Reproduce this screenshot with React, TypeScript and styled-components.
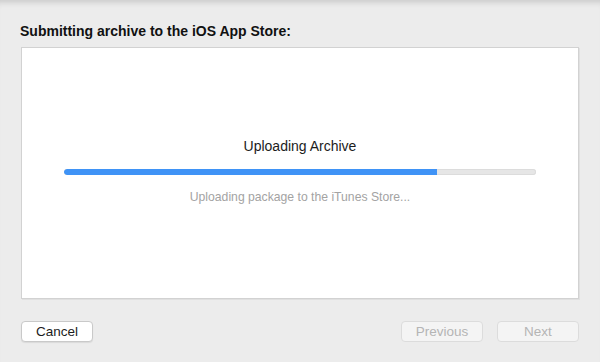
import styled, { createGlobalStyle } from 'styled-components';

const GlobalStyle = createGlobalStyle`
  html, body {
    margin: 0;
    padding: 0;
    background: #ececec;
  }
  * {
    box-sizing: border-box;
  }
`;

export default function App() {
  const progress = 0.79;

  return (
    <Sheet>
      <GlobalStyle />
      <Heading>Submitting archive to the iOS App Store:</Heading>
      <Panel>
        <Title>Uploading Archive</Title>
        <Track>
          <Fill style={{ width: `${progress * 100}%` }} />
        </Track>
        <Status>Uploading package to the iTunes Store...</Status>
      </Panel>
      <Footer>
        <Button $width={72}>Cancel</Button>
        <Spacer />
        <Button $width={82} disabled>
          Previous
        </Button>
        <Button $width={82} disabled>
          Next
        </Button>
      </Footer>
    </Sheet>
  );
}

const Sheet = styled.div`
  width: 600px;
  height: 362px;
  padding: 0 21px;
  display: flex;
  flex-direction: column;
  background: #ececec;
  box-shadow: inset 0 7px 6px -5px rgba(0, 0, 0, 0.16);
  font-family: 'Liberation Sans', Arial, sans-serif;
  overflow: hidden;
`;

const Heading = styled.h1`
  margin: 23px 0 0 -1px;
  font-size: 14px;
  line-height: 17px;
  font-weight: 700;
  color: #111;
`;

const Panel = styled.div`
  margin-top: 7px;
  height: 252px;
  background: #fff;
  border: 1px solid #d2d2d2;
  box-shadow: 1px 1px 0 #e0e0e0;
  padding: 90px 42px 0;
  display: flex;
  flex-direction: column;
  align-items: center;
`;

const Title = styled.div`
  font-size: 14px;
  line-height: 17px;
  color: #1c1c1c;
`;

const Track = styled.div`
  margin-top: 14px;
  width: 100%;
  height: 6px;
  border-radius: 3px;
  background: #e6e6e6;
  box-shadow: inset 0 0 0 1px #dcdcdc;
  overflow: hidden;
`;

const Fill = styled.div`
  height: 100%;
  border-radius: 3px 0 0 3px;
  background: #3f93f6;
`;

const Status = styled.div`
  margin-top: 15px;
  font-size: 12.2px;
  line-height: 15px;
  color: #a3a3a3;
`;

const Footer = styled.div`
  margin-top: 22px;
  display: flex;
  gap: 14px;
`;

const Spacer = styled.div`
  flex: 1;
`;

const Button = styled.button<{ $width: number }>`
  width: ${(p) => p.$width}px;
  height: 21px;
  padding: 0;
  border: 1px solid #c9c9c9;
  border-radius: 4px;
  background: #fff;
  box-shadow: 0 1px 1px rgba(0, 0, 0, 0.08);
  font-family: 'Liberation Sans', Arial, sans-serif;
  font-size: 13.5px;
  color: #1c1c1c;

  &:disabled {
    background: #f4f4f4;
    border-color: #dcdcdc;
    color: #b5b5b5;
    box-shadow: none;
  }
`;
